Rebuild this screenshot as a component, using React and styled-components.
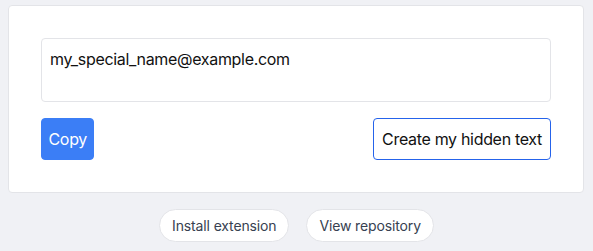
import React from "react";
import styled, { createGlobalStyle } from "styled-components";

const Global = createGlobalStyle`
  html, body { margin: 0; padding: 0; }
  body {
    background: #f0f1f5;
    font-family: Inter, "Noto Sans", "Liberation Sans", sans-serif;
    letter-spacing: -0.02em;
    -webkit-font-smoothing: antialiased;
  }
  * { box-sizing: border-box; }
`;

const Page = styled.div`
  padding: 5px 9px 0 8px;
  display: flex;
  flex-direction: column;
  gap: 16px;
`;

const Card = styled.div`
  background: #ffffff;
  border: 1px solid #e3e4e8;
  border-radius: 4px;
  padding: 32px;
  display: flex;
  flex-direction: column;
  gap: 16px;
`;

const TextArea = styled.textarea`
  display: block;
  width: 100%;
  height: 64px;
  resize: none;
  border: 1px solid #e3e4e8;
  border-radius: 4px;
  padding: 8px 8px;
  font: inherit;
  font-size: 16px;
  line-height: 24px;
  letter-spacing: -0.02em;
  color: #111111;
  outline: none;
`;

const Row = styled.div`
  display: flex;
  justify-content: space-between;
  align-items: center;
`;

const Button = styled.button`
  height: 42px;
  padding: 0 ${(p) => (p.$primary ? "6.5px" : "8px")};
  border-radius: 4px;
  font: inherit;
  font-size: 16px;
  letter-spacing: -0.02em;
  cursor: pointer;
  border: 1px solid ${(p) => (p.$primary ? "#3b7ef6" : "#2563eb")};
  background: ${(p) => (p.$primary ? "#3b7ef6" : "#ffffff")};
  color: ${(p) => (p.$primary ? "#ffffff" : "#111111")};
`;

const Footer = styled.div`
  display: flex;
  justify-content: center;
  gap: 17px;
  padding-left: 1px;
`;

const Pill = styled.a`
  display: inline-flex;
  align-items: center;
  height: 33px;
  padding: 0 12px;
  border-radius: 999px;
  background: #ffffff;
  border: 1px solid #e3e4e8;
  color: #374151;
  font-size: 14px;
  letter-spacing: -0.01em;
  text-decoration: none;
`;

export default function App() {
  return (
    <>
      <Global />
      <Page>
        <Card>
          <TextArea defaultValue="my_special_name@example.com" />
          <Row>
            <Button $primary>Copy</Button>
            <Button>Create my hidden text</Button>
          </Row>
        </Card>
        <Footer>
          <Pill href="#">Install extension</Pill>
          <Pill href="#">View repository</Pill>
        </Footer>
      </Page>
    </>
  );
}
